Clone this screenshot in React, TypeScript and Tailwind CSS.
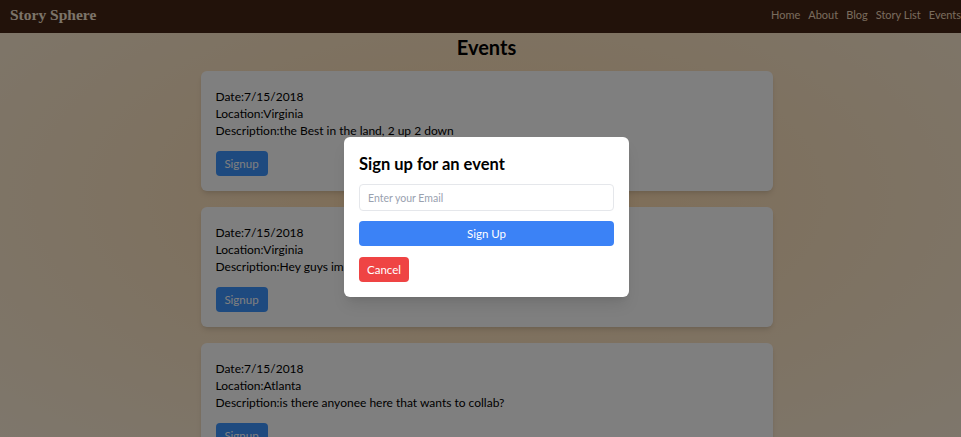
const events = [
  { date: "7/15/2018", location: "Virginia", description: "the Best in the land, 2 up 2 down" },
  { date: "7/15/2018", location: "Virginia", description: "Hey guys im having a meetup this weekend" },
  { date: "7/15/2018", location: "Atlanta", description: "is there anyonee here that wants to collab?" },
];

const App = () => {
  return (
    <div className="relative h-[437px] overflow-hidden">
      <div className="w-[973px] h-full font-['Lato',sans-serif] bg-[radial-gradient(ellipse_at_50%_45%,#ffd9a8_0%,#fde3c0_45%,#fdeed8_100%)]">
        <nav className="flex items-center justify-between h-[33px] bg-[#442414] pl-[10px]">
          <span className="font-['Liberation_Serif',serif] font-bold text-[15.5px] text-[#f8e8d4] mt-[-4px]">Story Sphere</span>
          <div className="flex gap-[8px] text-[11px] text-[#f0d8bc] whitespace-nowrap mr-[12px] mt-[-3px]">
            <span>Home</span>
            <span>About</span>
            <span>Blog</span>
            <span>Story List</span>
            <span>Events</span>
          </div>
        </nav>

        <h1 className="text-center text-[20px] font-bold text-black mt-[1px] leading-[26px]">Events</h1>

        <div className="flex flex-col gap-4 w-[572px] mx-auto mt-[11px]">
          {events.map((e, i) => (
            <div key={i} className="bg-white rounded-md shadow-md px-[15px] pt-[17px] pb-[15px]">
              <p className="text-[12px] leading-[17px] text-black">Date:{e.date}</p>
              <p className="text-[12px] leading-[17px] text-black">Location:{e.location}</p>
              <p className="text-[12px] leading-[17px] text-black">Description:{e.description}</p>
              <button className="block mt-[12px] w-[52px] h-[25px] rounded bg-[#3c94ff] text-white text-[11.5px]">Signup</button>
            </div>
          ))}
        </div>
      </div>

      <div className="absolute inset-0 bg-black/50" />

      <div className="absolute left-[344px] top-[137px] w-[285px] bg-white rounded-md shadow-lg p-[15px]">
        <h2 className="text-[16.5px] font-bold text-black leading-[22px] mt-[1px] font-['Lato',sans-serif]">Sign up for an event</h2>
        <input
          placeholder="Enter your Email"
          className="mt-[9px] w-full h-[27px] border border-gray-200 rounded px-[8px] text-[10.5px] font-['Lato',sans-serif] placeholder:text-gray-400 outline-none"
        />
        <button className="block mt-[10px] w-full h-[25px] rounded bg-[#3b82f6] text-white text-[11.5px] font-['Lato',sans-serif]">Sign Up</button>
        <button className="block mt-[11px] w-[50px] h-[25px] rounded bg-[#ef4444] text-white text-[11.5px] font-['Lato',sans-serif]">Cancel</button>
      </div>
    </div>
  );
};

export default App;
